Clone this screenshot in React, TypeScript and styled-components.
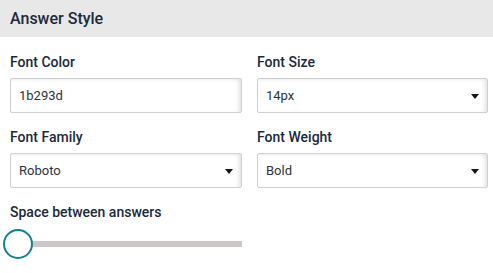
import React, { FC } from "react";
import styled, { createGlobalStyle } from "styled-components";

const GlobalStyle = createGlobalStyle`
  html, body {
    margin: 0;
    padding: 0;
    background: #ffffff;
    font-family: Roboto, "Liberation Sans", sans-serif;
  }
`;

const Panel = styled.div`
  width: 493px;
  height: 273px;
  background: #ffffff;
  overflow: hidden;
`;

const Header = styled.div`
  height: 37px;
  line-height: 37px;
  padding-left: 10px;
  background: #e8e8e8;
  color: #1b293d;
  font-size: 16px;
  font-weight: 500;
`;

const Body = styled.div`
  padding: 15px 5px 0 10px;
`;

const FieldGrid = styled.div`
  display: grid;
  grid-template-columns: 232px 231px;
  column-gap: 15px;
  row-gap: 14px;
`;

const Field = styled.div`
  display: flex;
  flex-direction: column;
`;

const Label = styled.label`
  height: 20px;
  line-height: 20px;
  margin-bottom: 6px;
  color: #1b293d;
  font-size: 14px;
  font-weight: 500;
`;

const Box = styled.div`
  position: relative;
  box-sizing: border-box;
  height: 35px;
  padding: 0 8px;
  display: flex;
  align-items: center;
  border: 1px solid #cfcfcf;
  border-radius: 2px;
  box-shadow: inset -3px 1px 4px -1px rgba(0, 0, 0, 0.12);
  color: #2b3340;
  font-size: 13px;
`;

const Caret = styled.span`
  position: absolute;
  right: 8px;
  top: 15px;
  width: 0;
  height: 0;
  border-left: 4.5px solid transparent;
  border-right: 4.5px solid transparent;
  border-top: 5px solid #151515;
`;

const SliderLabel = styled(Label)`
  margin-top: 14px;
  margin-bottom: 7px;
`;

const Slider = styled.div`
  position: relative;
  width: 232px;
  height: 30px;
  display: flex;
  align-items: center;
`;

const Track = styled.div`
  flex: 1;
  height: 6px;
  background: #cbc7c7;
`;

const Thumb = styled.div`
  position: absolute;
  left: -7px;
  top: 0;
  box-sizing: border-box;
  width: 30px;
  height: 30px;
  border: 2px solid #0f8391;
  border-radius: 50%;
  background: #ffffff;
`;

type FieldProps = {
  label: string;
  value: string;
  select?: boolean;
};

const FormField: FC<FieldProps> = ({ label, value, select }) => (
  <Field>
    <Label>{label}</Label>
    <Box>
      {value}
      {select && <Caret />}
    </Box>
  </Field>
);

const App: FC = () => (
  <>
    <GlobalStyle />
    <Panel>
      <Header>Answer Style</Header>
      <Body>
        <FieldGrid>
          <FormField label="Font Color" value="1b293d" />
          <FormField label="Font Size" value="14px" select />
          <FormField label="Font Family" value="Roboto" select />
          <FormField label="Font Weight" value="Bold" select />
        </FieldGrid>
        <SliderLabel as="div">Space between answers</SliderLabel>
        <Slider>
          <Track />
          <Thumb />
        </Slider>
      </Body>
    </Panel>
  </>
);

export default App;
